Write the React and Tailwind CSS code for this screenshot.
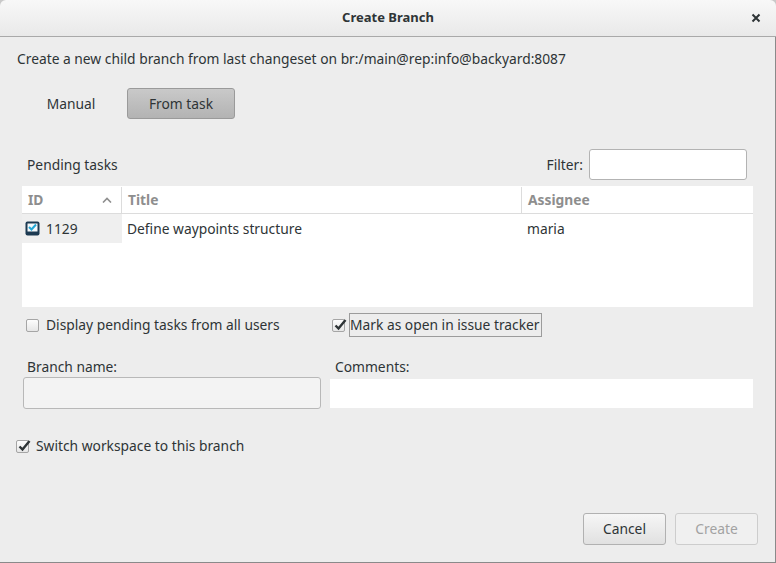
import React, { useState } from "react";

const font = { fontFamily: '"Noto Sans", "DejaVu Sans", sans-serif' };

const CheckBox = ({ checked }) => (
  <span className="relative inline-flex h-[13px] w-[13px] shrink-0 items-center justify-center rounded-[2px] border border-[#a5a5a5] bg-gradient-to-b from-[#fdfdfd] to-[#e6e6e6]">
    {checked && (
      <svg width="15" height="13" viewBox="0 0 15 13" className="absolute left-[0px] top-[-2px]">
        <path d="M2.5 7.5 L5.5 10.5 L12.5 2" fill="none" stroke="#2e3436" strokeWidth="2.4" />
      </svg>
    )}
  </span>
);

const TaskIcon = () => (
  <svg width="15" height="15" viewBox="0 0 15 15">
    <rect x="0.5" y="0.5" width="14" height="14" rx="2" fill="#1c3a52" />
    <rect x="2.5" y="2.5" width="10" height="8" fill="#f4f8fa" />
    <path d="M4 6 L6.5 8.5 L11 3.5" fill="none" stroke="#22a7d6" strokeWidth="2" />
  </svg>
);

const tasks = [{ id: "1129", title: "Define waypoints structure", assignee: "maria" }];

export default function App() {
  const [mode, setMode] = useState("task");

  return (
    <div className="h-[563px] w-[776px] bg-[#c9c9c9] text-[13.8px] text-[#2e3436]" style={font}>
      <div className="flex h-full flex-col">
        {/* Title bar */}
        <div className="flex h-[37px] shrink-0 items-center rounded-t-[6px] border-b border-[#a9a9a9] bg-gradient-to-b from-[#f8f8f8] to-[#e9e9e9] px-[14px]">
          <div className="flex-1" />
          <div className="text-[13px] font-bold">Create Branch</div>
          <div className="flex flex-1 justify-end">
            <svg width="10" height="10" viewBox="0 0 10 10" className="mr-[1px]">
              <path d="M1.5 1.5 L8.5 8.5 M8.5 1.5 L1.5 8.5" stroke="#2e3436" strokeWidth="2" />
            </svg>
          </div>
        </div>

        {/* Body */}
        <div className="flex flex-1 flex-col border-b border-r border-[#8a8a8a] bg-[#ededed]">
          <div className="ml-[17px] mt-[13px] leading-[18px]">
            Create a new child branch from last changeset on br:/main@rep:info@backyard:8087
          </div>

          {/* Mode switch */}
          <div className="ml-[17px] mt-[20px] flex gap-[2px]">
            <button
              onClick={() => setMode("manual")}
              className={`h-[31px] w-[108px] rounded-[3px] border pt-[1px] ${
                mode === "manual"
                  ? "border-[#9a9a9a] bg-gradient-to-b from-[#c8c8c8] to-[#b4b4b4]"
                  : "border-transparent"
              }`}
            >
              Manual
            </button>
            <button
              onClick={() => setMode("task")}
              className={`h-[31px] w-[108px] rounded-[3px] border pt-[1px] ${
                mode === "task"
                  ? "border-[#9a9a9a] bg-gradient-to-b from-[#c9c9c9] to-[#b3b3b3]"
                  : "border-transparent"
              }`}
            >
              From task
            </button>
          </div>

          {/* Pending tasks / filter */}
          <div className="mt-[30px] flex h-[31px] items-center">
            <div className="ml-[27px] mt-[2px] flex-1">Pending tasks</div>
            <div className="mr-[6px] mt-[1px]">Filter:</div>
            <input className="mr-[28px] h-[31px] w-[158px] rounded-[3px] border border-[#b3b3b3] bg-white px-2 outline-none" />
          </div>

          {/* Table */}
          <div className="ml-[22px] mt-[6px] h-[121px] w-[731px] bg-white">
            <div className="flex h-[28px] border-b border-[#dcdcdc] pt-[1px] font-bold text-[#8e8e8e]">
              <div className="flex w-[100px] items-center justify-between border-r border-[#dcdcdc] pl-[6px] pr-[9px]">
                <span>ID</span>
                <svg width="10" height="6" viewBox="0 0 10 6">
                  <path d="M1 5.5 L5 1.5 L9 5.5" fill="none" stroke="#8e8e8e" strokeWidth="1.6" />
                </svg>
              </div>
              <div className="flex w-[400px] items-center border-r border-[#dcdcdc] pl-[6px]">Title</div>
              <div className="flex flex-1 items-center pl-[6px]">Assignee</div>
            </div>
            {tasks.map((t) => (
              <div key={t.id} className="flex h-[29px] items-center">
                <div className="flex h-full w-[100px] items-center gap-[6px] bg-[#efefef] pl-[3px]">
                  <TaskIcon />
                  <span className="pt-[1px]">{t.id}</span>
                </div>
                <div className="w-[400px] pl-[5px] pt-[1px]">{t.title}</div>
                <div className="flex-1 pl-[5px] pt-[1px]">{t.assignee}</div>
              </div>
            ))}
          </div>

          {/* Options */}
          <div className="mt-[6px] flex h-[24px] items-center">
            <div className="ml-[26px] flex w-[306px] items-center gap-[7px]">
              <CheckBox />
              <span>Display pending tasks from all users</span>
            </div>
            <div className="flex items-center gap-[4px]">
              <CheckBox checked />
              <span className="flex h-[24px] items-center border border-[#9c9c9c] pr-[1px]">
                Mark as open in issue tracker
              </span>
            </div>
          </div>

          {/* Branch name / comments */}
          <div className="mt-[21px] flex">
            <div className="ml-[23px] flex w-[298px] flex-col">
              <div className="pl-[4px] leading-[18px]">Branch name:</div>
              <input className="mt-[1px] h-[32px] rounded-[3px] border border-[#b8b8b8] bg-[#f3f3f3] px-2 outline-none" />
            </div>
            <div className="ml-[9px] flex w-[423px] flex-col">
              <div className="pl-[5px] leading-[18px]">Comments:</div>
              <textarea className="mt-[3px] h-[29px] resize-none bg-white outline-none" />
            </div>
          </div>

          <div className="ml-[16px] mt-[27px] flex items-center gap-[7px]">
            <CheckBox checked />
            <span>Switch workspace to this branch</span>
          </div>

          <div className="flex-1" />

          {/* Footer buttons */}
          <div className="mb-[17px] mr-[17px] flex justify-end gap-[9px]">
            <button className="h-[32px] w-[83px] rounded-[3px] border border-[#b1b1b1] bg-gradient-to-b from-[#f6f6f6] to-[#e1e1e1]">
              Cancel
            </button>
            <button
              disabled
              className="h-[32px] w-[83px] rounded-[3px] border border-[#cdcdcd] bg-[#f0f0f0] text-[#a2a2a2]"
            >
              Create
            </button>
          </div>
        </div>
      </div>
    </div>
  );
}
